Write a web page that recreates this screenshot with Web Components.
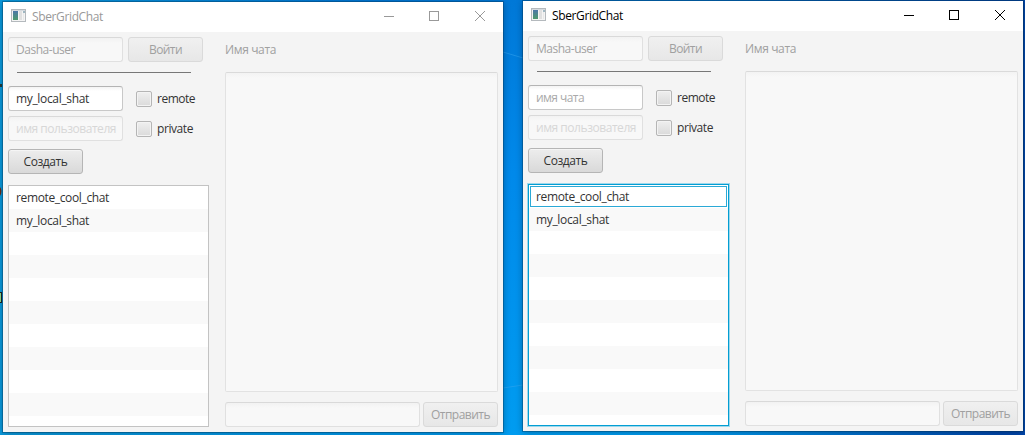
<!DOCTYPE html>
<html lang="ru">
<head>
<meta charset="utf-8">
<title>SberGridChat</title>
<style>
html,body{margin:0;height:100%;overflow:hidden}
body{font:12px/16px "Open Sans","Noto Sans",sans-serif;color:#333}
</style>
</head>
<body>
<chat-desktop></chat-desktop>
<script>
const define = (name, html, setup) => {
  const t = document.createElement('template');
  t.innerHTML = html;
  customElements.define(name, class extends HTMLElement {
    connectedCallback() {
      if (this.shadowRoot) return;
      this.attachShadow({mode: 'open'}).append(t.content.cloneNode(true));
      if (setup) setup(this, this.shadowRoot);
    }
  });
};

// Label whose tracking adapts to a given width in pixels.
define('ui-text', `<style>:host{display:inline-block;white-space:pre}</style><span></span>`, (el, root) => {
  const s = root.querySelector('span');
  s.textContent = el.getAttribute('text');
  const w = +el.getAttribute('w');
  if (w) s.style.letterSpacing = (w - s.getBoundingClientRect().width) / s.textContent.length + 'px';
});

define('ui-field', `<style>
:host{display:flex;align-items:center;box-sizing:border-box;height:25px;padding:0 7px;border:1px solid #c8c8c8;border-top-color:#b4b4b4;border-radius:3px;background:linear-gradient(#f4f4f4,#fff 4px);color:#333;overflow:hidden}
:host([off]){border-color:#e0e0e0;border-top-color:#d9d9d9;background:linear-gradient(#f2f2f2,#f8f8f8 5px);color:#a3a3a3}
:host([prompt]){color:#aaa}
:host([off][prompt]){color:#d7d7d7}
</style><slot></slot>`);

define('ui-button', `<style>
:host{display:flex;align-items:center;justify-content:center;box-sizing:border-box;width:75px;height:25px;border:1px solid #b5b5b5;border-radius:3px;background:linear-gradient(#ededed,#d9d9d9);box-shadow:inset 0 1px #f5f5f5;color:#333}
:host([off]){border-color:#dadada;background:linear-gradient(#f0f0f0,#e7e7e7);box-shadow:none;color:#a0a0a0}
</style><slot></slot>`);

define('ui-check', `<style>
:host{display:flex;align-items:center;gap:5px;height:16px;color:#333}
i{box-sizing:border-box;width:16px;height:16px;border:1px solid #b5b5b5;border-radius:2px;background:linear-gradient(#efefef,#dadada);box-shadow:inset 0 0 0 1px #f3f3f3}
</style><i></i><slot></slot>`);

define('chat-list', `<style>
:host{display:block;box-sizing:border-box;width:201px;height:242px;border:1px solid #c3c3c3;background:repeating-linear-gradient(#fff 0 23px,#f9f9f9 23px 46px)}
:host([active]){border-color:#039ed3;box-shadow:0 0 0 1px #9ed8ec}
.row{box-sizing:border-box;height:23px;padding:4px 7px 3px}
:host([active]) .first{height:21px;margin:1px 1px 1px;padding:2px 5px 1px;border:1px solid #2ba9d6}
</style><div class="row first"><ui-text text="remote_cool_chat" w="93"></ui-text></div><div class="row"><ui-text text="my_local_shat" w="73"></ui-text></div>`);

define('title-bar', `<style>
:host{display:flex;align-items:center;height:30px;background:#fff;color:#999}
:host([active]){color:#000}
.icon{margin:0 6px 2px 8px}
ui-text{flex:1}
</style>
<svg class="icon" width="15" height="14" shape-rendering="crispEdges"><defs><linearGradient id="g" x2="0" y2="1"><stop stop-color="#4c77a8"/><stop offset="1" stop-color="#4c9a6c"/></linearGradient></defs><rect x=".5" y=".5" width="14" height="12" fill="#f4f4f4" stroke="#b4b9bd"/><path d="M1 1h13v1H1z" fill="#d5dade"/><path d="M2 2h5v9H2z" fill="url(#g)"/><path d="M8 2h3v9H8z" fill="#e0e0e0"/><path d="M12 2h2v2h-2z" fill="#9fb7c2"/><path d="M12 4h1v7h-1z" fill="#e8e8e8"/></svg>
<ui-text text="SberGridChat" w="71"></ui-text>
<svg width="138" height="30" fill="none" stroke="currentColor"><path d="M19 14.5h10M64.5 9.5h9v9h-9z" shape-rendering="crispEdges"/><path d="M110 9l10 10M120 9l-10 10"/></svg>`);

define('chat-window', `<style>
:host{display:block;width:500px;height:430px;background:#f4f4f4;box-shadow:0 0 0 1px #00305055,0 1px 7px #0005}
.body{display:flex;gap:16px;padding:5px 5px 0}
.left{width:201px}
.row{display:flex;gap:5px}
.line{height:1px;margin:10px 18px 13px 9px;background:#777}
.form{display:grid;grid-template-columns:115px auto;gap:5px 13px;align-items:center}
.create{margin:8px 0 11px}
.right{width:273px}
.name{height:35px;color:#a0a0a0;padding-top:5px;box-sizing:border-box}
.area{box-sizing:border-box;height:320px;border:1px solid #e2e2e2;border-top-color:#dadada;border-radius:2px;background:linear-gradient(#f3f3f3,#f8f8f8 5px)}
.send{display:flex;gap:3px;margin-top:10px}
.send ui-field{width:195px}
</style>
<title-bar></title-bar>
<div class="body"><div class="left">
<div class="row"><ui-field class="user" off style="width:115px"></ui-field><ui-button off><ui-text text="Войти" w="33"></ui-text></ui-button></div>
<div class="line"></div>
<div class="form"><ui-field class="chat"></ui-field><ui-check><ui-text text="remote" w="38"></ui-text></ui-check>
<ui-field off prompt><ui-text text="имя пользователя" w="100"></ui-text></ui-field><ui-check><ui-text text="private" w="36"></ui-text></ui-check></div>
<ui-button class="create"><ui-text text="Создать" w="44"></ui-text></ui-button>
<chat-list></chat-list>
</div><div class="right">
<div class="name"><ui-text text="Имя чата" w="51"></ui-text></div><div class="area"></div>
<div class="send"><ui-field off></ui-field><ui-button off><ui-text text="Отправить" w="59"></ui-text></ui-button></div>
</div></div>`, (el, root) => {
  const label = (sel, text, w) => { root.querySelector(sel).innerHTML = `<ui-text text="${text}" w="${w}"></ui-text>`; };
  label('.user', el.getAttribute('user'), el.getAttribute('user-w'));
  const chat = el.getAttribute('chat');
  if (chat) label('.chat', chat, 73);
  else { root.querySelector('.chat').setAttribute('prompt', ''); label('.chat', 'имя чата', 48); }
  if (el.hasAttribute('active')) {
    root.querySelector('title-bar').setAttribute('active', '');
    root.querySelector('chat-list').setAttribute('active', '');
  }
});

define('chat-desktop', `<style>
:host{display:block;width:1025px;height:435px;overflow:hidden;position:relative;background:linear-gradient(90deg,#0a9ade 0 3px,transparent 360px 700px,#0046ab 1000px),linear-gradient(#0078d7,#0089ea 40%,#009cf0)}
.wins{position:relative;display:flex;gap:20px;align-items:flex-start;padding:2px 0 0 3px}
chat-window{flex:none}
.second{margin-top:-1px}
.rays{position:absolute;inset:0}
</style>
<svg class="rays" width="1025" height="435"><path d="M503 52l20 6M503 388l20-3" stroke="#38a7f2" stroke-opacity=".5"/><path d="M0 84h2v3H0z" fill="#253b3a"/><path d="M0 187q3 4 0 9z" fill="#6b2b16"/><path d="M0 292h2v11H0z" fill="#1c2428"/><path d="M0 293h1v9H0z" fill="#8fe08f"/></svg>
<div class="wins"><chat-window user="Dasha-user" user-w="59" chat="my_local_shat"></chat-window><chat-window class="second" active user="Masha-user" user-w="61"></chat-window></div>`);
</script>
</body>
</html>
